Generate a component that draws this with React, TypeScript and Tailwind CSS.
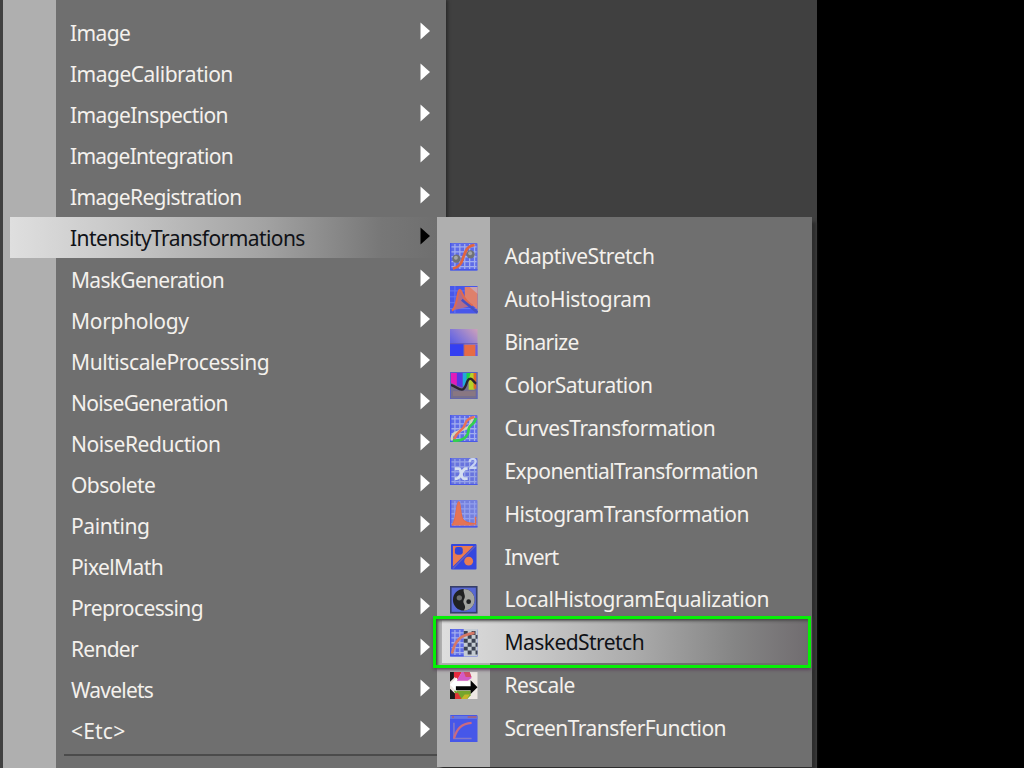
import React from "react";

const LEFT_ITEMS: [string, string][] = [
  ["Image", "tracking-[-0.6px]"],
  ["ImageCalibration", "tracking-[-0.5px]"],
  ["ImageInspection", "tracking-[-0.6px]"],
  ["ImageIntegration", "tracking-[-0.72px]"],
  ["ImageRegistration", "tracking-[-0.66px]"],
  ["IntensityTransformations", "tracking-[-0.58px]"],
  ["MaskGeneration", "pl-px tracking-[-0.7px]"],
  ["Morphology", "pl-px tracking-[-0.3px]"],
  ["MultiscaleProcessing", "pl-px tracking-[-0.42px]"],
  ["NoiseGeneration", "pl-px tracking-[-0.66px]"],
  ["NoiseReduction", "pl-px tracking-[-0.42px]"],
  ["Obsolete", "pl-px tracking-[-0.55px]"],
  ["Painting", "pl-px tracking-[-0.4px]"],
  ["PixelMath", "pl-px tracking-[-0.6px]"],
  ["Preprocessing", "pl-px tracking-[-0.62px]"],
  ["Render", "pl-px tracking-[-0.75px]"],
  ["Wavelets", "pl-px tracking-[-0.78px]"],
  ["<Etc>", "pl-px tracking-[0.2px]"],
];

function Grid({ base = "#5f6ce8", line = "#a3aeee" }: { base?: string; line?: string }) {
  return (
    <>
      <rect width="28" height="28" rx="1" fill={base} />
      <path d="M5 1V27M10 1V27M15 1V27M20 1V27M25 1V27M1 4H27M1 9H27M1 14H27M1 19H27M1 24H27" stroke={line} strokeWidth="1.3" />
      <path d="M.7 0V27.3H28" stroke="#4958e8" strokeWidth="1.4" fill="none" />
    </>
  );
}

const ICONS: Record<string, React.ReactNode> = {
  AdaptiveStretch: (
    <>
      <Grid />
      <circle cx="6.5" cy="16" r="4.2" fill="#707276" />
      <circle cx="6" cy="15" r="2" fill="#a5a7a6" />
      <circle cx="21" cy="11.5" r="4.2" fill="#707276" />
      <circle cx="20.5" cy="10.5" r="2" fill="#a5a7a6" />
      <path d="M3 26C12 24 12 18 14.5 12C17 5 19 3 25 2" stroke="#e1653f" strokeWidth="2.8" fill="none" />
    </>
  ),
  AutoHistogram: (
    <>
      <rect width="28" height="28" fill="#4857ea" />
      <path d="M5 0V28M0 5H15M0 11H15M0 17H15M0 23H28" stroke="#6879f3" />
      <path d="M15 1H28V24L15 13Z" fill="#df806c" />
      <path d="M20 1H28V8Z" fill="#cba5ad" />
      <path d="M2 25C8 21 7 4 10 4C12 4 13 15 23 20" stroke="#df6950" strokeWidth="2.2" fill="#b16c8a" />
      <path d="M12 14L28 27" stroke="#4650c3" strokeWidth="2.5" />
    </>
  ),
  Binarize: (
    <>
      <rect width="28" height="28" fill="url(#binarySky)" />
      <path d="M0 15H14V28H0Z" fill="#343ff1" />
      <path d="M14 16H26V28H14Z" fill="#e66b46" />
      <path d="M0 15H28M14 15V28" stroke="#655bb4" strokeWidth="1" />
      <path d="M27 16V28" stroke="#695cdf" strokeWidth="2" />
    </>
  ),
  ColorSaturation: (
    <>
      <rect width="28" height="28" fill="#756f8d" />
      <path d="M1 1H7V14L1 11Z" fill="#e11bb9" />
      <path d="M7 1H13V16L7 14Z" fill="#5634e8" />
      <path d="M13 1H17V12L13 15Z" fill="#20a9dc" />
      <path d="M17 1H21V8L17 10Z" fill="#1cd447" />
      <path d="M21 1H25V18H19V8Z" fill="#b5d127" />
      <path d="M24 1H27V17H24Z" fill="#e36427" />
      <path d="M1 13C7 15 8 18 12 18C17 18 16 8 20 7C23 6 23 10 27 12" stroke="#29242c" strokeWidth="2.4" fill="none" />
      <path d="M3 22H26" stroke="#897782" strokeWidth="5" />
      <rect x=".5" y=".5" width="27" height="27" fill="none" stroke="#5761c5" />
    </>
  ),
  CurvesTransformation: (
    <>
      <Grid />
      <path d="M2 26C-1 14 20 17 21 9C22 5 22 3 25 2" stroke="#d3d6bb" strokeWidth="2.5" fill="none" />
      <path d="M4 25C8 14 13 18 16 8C17 5 20 3 25 2" stroke="#e97155" strokeWidth="2.5" fill="none" />
      <path d="M3 26C12 27 19 23 19 14C19 10 26 10 26 3" stroke="#32cf50" strokeWidth="2.8" fill="none" />
    </>
  ),
  ExponentialTransformation: (
    <>
      <Grid base="#6874de" line="#97a4e7" />
      <path d="M5 11H9C12 11 11 21 14 21H18M18 11H16C12 11 11 21 7 21H5" stroke="#d5dff0" strokeWidth="3" fill="none" />
      <path d="M20 4C20 0 27 0 26 4C26 6 22 8 21 10H27" stroke="#c8d3f3" strokeWidth="2.2" fill="none" />
    </>
  ),
  HistogramTransformation: (
    <>
      <Grid base="#7480de" line="#929fed" />
      <path d="M2 25.5C7 22 6 3 9 2C11 3 10 18 14 21C17 24 22 24 26 24.5V17" fill="none" stroke="#e66c48" strokeWidth="1.5" />
      <path d="M2 26C7 22 6 3 9 2C11 3 10 18 14 21C17 24 22 24 26 26Z" fill="#e47455" />
    </>
  ),
  Invert: (
    <>
      <rect x="1" y="1" width="26" height="26" rx="1" fill="#3447df" />
      <path d="M3 3H24L3 24Z" fill="#e97b51" />
      <rect x="5" y="4" width="8" height="8" rx="2.5" fill="#3044da" />
      <circle cx="19" cy="18.5" r="4.5" fill="#e97c52" />
      <path d="M3 26L26 3" stroke="#6960bd" strokeWidth="1.2" />
    </>
  ),
  LocalHistogramEqualization: (
    <>
      <rect x=".8" y=".8" width="26.4" height="26.4" fill="#5868d4" stroke="#363e69" strokeWidth="1.7" />
      <circle cx="14" cy="14" r="11" fill="#202122" />
      <path d="M14 3A11 11 0 0 1 14 25C18 20 12 18 14 14C17 10 13 7 14 3Z" fill="#a3a4a0" />
      <circle cx="9.5" cy="12" r="2.7" fill="#6e6f6d" />
      <circle cx="19" cy="16" r="2.4" fill="#202224" />
    </>
  ),
  MaskedStretch: (
    <>
      <Grid />
      <rect x="14" width="14" height="28" fill="#c5ccd3" />
      <path d="M14 2H18V6H14ZM22 2H26V6H22ZM18 6H22V10H18ZM26 6H28V10H26ZM14 10H18V14H14ZM22 10H26V14H22ZM18 14H22V18H18ZM26 14H28V18H26ZM14 18H18V22H14ZM22 18H26V22H22ZM18 22H22V26H18ZM26 22H28V26H26Z" fill="#3d4353" />
      <path d="M2 25C5 12 10 6 25 4" stroke="#d77866" strokeWidth="2.7" fill="none" />
    </>
  ),
  Rescale: (
    <>
      <rect width="28" height="28" fill="#eee8e3" />
      <path d="M4 0H12L8 7L4 5Z" fill="#e82b3e" />
      <path d="M12 0H20L22 6L18 9H7L9 5Z" fill="#d25bc6" />
      <path d="M14 0H20L22 5H16Z" fill="#d34d67" />
      <path d="M4 19H21V24L17 28H8Z" fill="#75a52d" />
      <path d="M4 22L8 21L12 28H4Z" fill="#df3434" />
      <path d="M15 23H20L17 28H11Z" fill="#c7b62b" />
      <path d="M0 0H4V6L0 10ZM0 17L5 22V28H0Z" fill="#191718" />
      <path d="M0 13L7 5.5V9.5H22V15H7V20Z" fill="#fff" />
      <path d="M28 15.5L21 8.5V14.5H6V18.5H21V22.5Z" fill="#050505" />
    </>
  ),
  ScreenTransferFunction: (
    <>
      <rect width="28" height="28" rx="1" fill="#4657e9" />
      <path d="M0 1H28V4H0Z" fill="#6876df" />
      <path d="M2 2H4M18 2H27" stroke="#9b668e" strokeWidth="2" />
      <path d="M4 8V24H22" stroke="#8378c9" strokeWidth="1.6" fill="none" />
      <path d="M4 24C7 13 12 9 22 8" stroke="#ca6a81" strokeWidth="2.3" fill="none" />
    </>
  ),
};

const RIGHT_ITEMS: [string, string][] = [
  ["AdaptiveStretch", "tracking-[-0.43px]"],
  ["AutoHistogram", "tracking-[-0.3px]"],
  ["Binarize", "tracking-[-0.7px]"],
  ["ColorSaturation", "tracking-[-0.5px]"],
  ["CurvesTransformation", "tracking-[-0.45px]"],
  ["ExponentialTransformation", "tracking-[-0.62px]"],
  ["HistogramTransformation", "tracking-[-0.52px]"],
  ["Invert", "tracking-[-0.85px]"],
  ["LocalHistogramEqualization", "tracking-[-0.42px]"],
  ["MaskedStretch", "tracking-[-0.55px]"],
  ["Rescale", "tracking-[-0.53px]"],
  ["ScreenTransferFunction", "tracking-[-0.55px]"],
];

function Arrow({ active }: { active: boolean }) {
  return (
    <svg className="mb-[3px] mr-[7px] h-[18px] w-[10px] shrink-0" viewBox="0 0 10 18">
      <path d="M.5 .5V17.5L10 9Z" fill={active ? "#000" : "#fff"} />
    </svg>
  );
}

export default function App() {
  return (
    <div className="relative h-[768px] w-[1024px] overflow-hidden bg-black font-['Noto_Sans',sans-serif] text-[21px] leading-none text-[#f4f1ed]">
      <div className="flex h-full w-[817px] bg-[#404040]">
        <div className="flex h-full w-[446px] bg-[#6f6f6f] shadow-[2px_0_3px_#2b2b2b]">
          <div className="w-[3px] bg-[#414141]" />
          <div className="w-[53px] bg-[#afafaf]" />
          <div className="-ml-[46px] flex w-[427px] shrink-0 flex-col pt-[12.1px]">
            {LEFT_ITEMS.map(([name, tracking]) => {
              const active = name === "IntensityTransformations";
              return (
                <div
                  key={name}
                  className={`flex h-[41.07px] shrink-0 items-center justify-between pl-[60px] ${active ? "bg-[linear-gradient(90deg,#dfdfdf_0%,#c8c8c8_25%,#a2a2a2_60%,#777_87%,#6f6f6f_100%)] text-[#101217]" : ""}`}
                >
                  <span className={`whitespace-nowrap pt-[2px] ${tracking}`}>{name}</span>
                  <Arrow active={active} />
                </div>
              );
            })}
            <div className="ml-[54px] mt-[3px] h-[2px] bg-[#4b4b4b]" />
          </div>
        </div>
      </div>

      <div className="absolute left-[437px] top-[217px] flex h-[550px] w-[375px] bg-[#6f6f6f] shadow-[4px_5px_3px_#2d2d2d]">
        <div className="w-[53px] shrink-0 bg-[#afafaf]" />
        <div className="-ml-[53px] flex w-[375px] flex-col pt-[17.5px]">
          {RIGHT_ITEMS.map(([name, tracking]) => {
            const active = name === "MaskedStretch";
            return (
              <div
                key={name}
                className={`flex h-[42.88px] shrink-0 items-center ${active ? "mx-[5px] bg-[linear-gradient(90deg,#dedede_0%,#cbcbcb_22%,#acacac_52%,#858585_80%,#716d70_100%)] pl-[8px] text-[#101217]" : "pl-[13px]"}`}
              >
                <svg className="mt-[2px] h-[27.5px] w-[27.5px] shrink-0 blur-[0.4px]" viewBox="0 0 28 28">
                  <defs>
                    <linearGradient id="binarySky" x1="0" y1="1" x2="1" y2="0">
                      <stop offset="0" stopColor="#3c48e9" />
                      <stop offset=".45" stopColor="#7770dc" />
                      <stop offset="1" stopColor="#cea1b9" />
                    </linearGradient>
                  </defs>
                  {ICONS[name]}
                </svg>
                <span className={`ml-[27px] whitespace-nowrap pt-[2px] ${tracking}`}>{name}</span>
              </div>
            );
          })}
        </div>
      </div>
      <div className="absolute left-[433px] top-[616px] h-[52px] w-[378px] border-[3px] border-[#05f005] shadow-[0_2px_3px_#604960,inset_2px_2px_3px_#4c4c4c]" />
    </div>
  );
}
